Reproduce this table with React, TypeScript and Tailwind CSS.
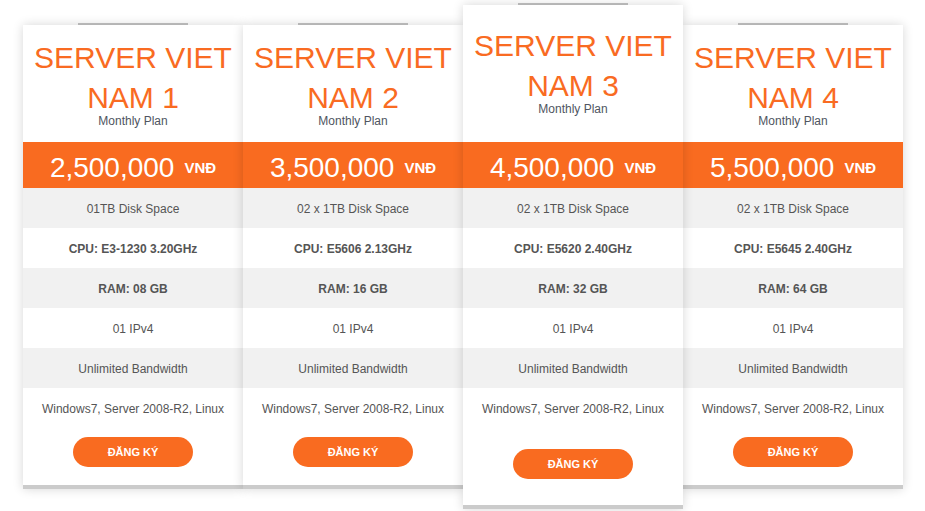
import React from "react";

type Plan = {
  n: number;
  price: string;
  disk: string;
  cpu: string;
  ram: string;
  featured?: boolean;
};

const plans: Plan[] = [
  { n: 1, price: "2,500,000", disk: "01TB Disk Space", cpu: "CPU: E3-1230 3.20GHz", ram: "RAM: 08 GB" },
  { n: 2, price: "3,500,000", disk: "02 x 1TB Disk Space", cpu: "CPU: E5606 2.13GHz", ram: "RAM: 16 GB" },
  { n: 3, price: "4,500,000", disk: "02 x 1TB Disk Space", cpu: "CPU: E5620 2.40GHz", ram: "RAM: 32 GB", featured: true },
  { n: 4, price: "5,500,000", disk: "02 x 1TB Disk Space", cpu: "CPU: E5645 2.40GHz", ram: "RAM: 64 GB" },
];

function Row({ text, gray, bold }: { text: string; gray?: boolean; bold?: boolean }) {
  return (
    <div
      className={`h-[40px] pt-[2px] flex items-center justify-center text-[12px] text-[#555555] ${
        gray ? "bg-[#f1f1f1]" : "bg-white"
      } ${bold ? "font-bold" : ""}`}
    >
      {text}
    </div>
  );
}

function Card({ p }: { p: Plan }) {
  const f = !!p.featured;
  return (
    <div className={`flex flex-col items-center w-[220px] ${f ? "relative z-10" : "mt-[20px]"}`}>
      <div className="w-[110px] h-[2px] bg-[#c4c4c4]" />
      <div className="w-[220px] bg-white shadow-[0_0_10px_rgba(0,0,0,0.16)] border-b-4 border-[#cbcbcb]">
        <div className={`text-center ${f ? "pt-[21px] pb-[26px]" : "pt-[13px] pb-[14px]"}`}>
          <div className="text-[30px] leading-[40px] text-[#f96b22]">
            SERVER VIET
            <br />
            NAM {p.n}
          </div>
          <div className="-mt-[4px] text-[12px] leading-[14px] text-[#4f5561]">Monthly Plan</div>
        </div>
        <div className="h-[46px] pt-[5px] bg-[#f96b20] flex items-center justify-center text-white">
          <span className="text-[28px] leading-none">{p.price}</span>
          <span className="ml-[10px] text-[15px] font-bold leading-none">VNĐ</span>
        </div>
        <Row text={p.disk} gray />
        <Row text={p.cpu} bold />
        <Row text={p.ram} gray bold />
        <Row text="01 IPv4" />
        <Row text="Unlimited Bandwidth" gray />
        <Row text="Windows7, Server 2008-R2, Linux" />
        <div className={`flex justify-center ${f ? "pt-[21px] pb-[26px]" : "pt-[9px] pb-[18px]"}`}>
          <button className="w-[120px] h-[30px] pt-[1px] rounded-full bg-[#f96b20] text-white text-[11px] font-bold">
            ĐĂNG KÝ
          </button>
        </div>
      </div>
    </div>
  );
}

export default function App() {
  return (
    <div className="w-[925px] h-[511px] bg-white font-['Liberation_Sans',Arial,sans-serif] overflow-hidden">
      <div className="flex items-start pl-[23px] pt-[3px]">
        {plans.map((p) => (
          <Card key={p.n} p={p} />
        ))}
      </div>
    </div>
  );
}
